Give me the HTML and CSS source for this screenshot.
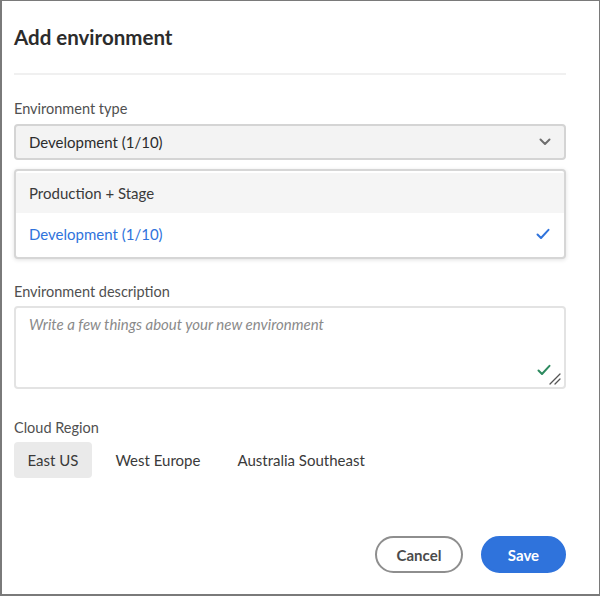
FILE: index.html
```html
<!DOCTYPE html>
<html>
<head>
<meta charset="utf-8">
<link rel="stylesheet" href="styles.css">
</head>
<body>
<div class="dialog">
  <h1 class="title">Add environment</h1>
  <div class="divider"></div>

  <div class="field type">
    <div class="label">Environment type</div>
    <div class="select">
      <span>Development (1/10)</span>
      <svg class="chev" width="12" height="8" viewBox="0 0 12 8"><path d="M1.5 1.5 L6 6 L10.5 1.5" fill="none" stroke="#6e6e6e" stroke-width="2" stroke-linecap="round" stroke-linejoin="round"/></svg>
    </div>
    <div class="menu">
      <div class="option hover">Production + Stage</div>
      <div class="option selected">
        <span>Development (1/10)</span>
        <svg width="14" height="12" viewBox="0 0 14 12"><path d="M1.5 6.5 L5 10 L12.5 1.8" fill="none" stroke="#2f73dc" stroke-width="2" stroke-linecap="round" stroke-linejoin="round"/></svg>
      </div>
    </div>
  </div>

  <div class="field desc">
    <div class="label">Environment description</div>
    <div class="textarea">
      <span class="placeholder">Write a few things about your new environment</span>
      <svg class="valid" width="14" height="12" viewBox="0 0 14 12"><path d="M1.5 6.5 L5 10 L12.5 1.8" fill="none" stroke="#2d8a5f" stroke-width="2" stroke-linecap="round" stroke-linejoin="round"/></svg>
      <svg class="grip" width="12" height="12" viewBox="0 0 12 12"><path d="M1 11 L11 1 M6 11 L11 6" fill="none" stroke="#555" stroke-width="1.3" stroke-linecap="round"/></svg>
    </div>
  </div>

  <div class="field region">
    <div class="label">Cloud Region</div>
    <div class="tabs">
      <div class="tab active">East US</div>
      <div class="tab">West Europe</div>
      <div class="tab">Australia Southeast</div>
    </div>
  </div>

  <div class="actions">
    <button class="btn secondary">Cancel</button>
    <button class="btn primary">Save</button>
  </div>
</div>
</body>
</html>
```
FILE: styles.css
```css
* { box-sizing: border-box; }
html, body { margin: 0; padding: 0; }
body { font-family: Lato, "Noto Sans", sans-serif; background: #fff; }
.dialog {
  width: 600px;
  height: 596px;
  border: 1px solid #7a7a7a;
  border-left-width: 2px;
  border-bottom-width: 2px;
  padding: 0 33px 0 12px;
  display: flex;
  flex-direction: column;
  position: relative;
}
.title {
  margin: 24px 0 0 0;
  font-size: 20.5px;
  font-weight: 700;
  color: #2c2c2c;
  line-height: 24px;
}
.divider {
  height: 2px;
  background: #f0f0f0;
  margin-top: 24px;
}
.field { display: flex; flex-direction: column; }
.label {
  font-size: 14.5px;
  color: #505050;
  line-height: 18px;
}
.type .label { margin-top: 25px; }
.select {
  margin-top: 6px;
  height: 36px;
  background: #f3f3f3;
  border: 2px solid #d4d4d4;
  border-radius: 4px;
  display: flex;
  align-items: center;
  justify-content: space-between;
  padding: 0 13px 0 13px;
  font-size: 15px;
  color: #2c2c2c;
}
.menu {
  margin-top: 9px;
  border: 2px solid #d6d6d6;
  border-radius: 4px;
  padding: 2px 0;
  box-shadow: 0 1px 4px rgba(0,0,0,0.12);
  background: #fff;
}
.option {
  height: 40px;
  display: flex;
  align-items: center;
  justify-content: space-between;
  padding: 0 14px 0 13px;
  font-size: 15px;
  color: #3a3a3a;
}
.option.hover { background: #f5f5f5; }
.option.selected { color: #2f73dc; height: 42px; }
.desc .label { margin-top: 24px; }
.desc .textarea { margin-top: 5px; }
.textarea {
  height: 83px;
  border: 2px solid #e3e3e3;
  border-radius: 4px;
  padding: 6px 13px;
  position: relative;
}
.placeholder {
  font-style: italic;
  font-size: 15px;
  color: #8a8a8a;
}
.valid { position: absolute; right: 13px; bottom: 11px; }
.grip { position: absolute; right: 3px; bottom: 2px; }
.region .label { margin-top: 30px; }
.tabs {
  margin-top: 5px;
  display: flex;
  gap: 10px;
}
.tab {
  height: 36px;
  padding: 0 13.5px;
  display: flex;
  align-items: center;
  border-radius: 4px;
  font-size: 15px;
  color: #3a3a3a;
}
.tab.active { background: #eaeaea; }
.actions {
  margin-top: auto;
  margin-bottom: 21px;
  display: flex;
  justify-content: flex-end;
  gap: 18px;
}
.btn {
  font-family: Lato, "Noto Sans", sans-serif;
  height: 37px;
  border-radius: 19px;
  font-size: 15px;
  font-weight: 700;
  padding: 0 18px;
  cursor: pointer;
}
.btn.secondary {
  background: #fff;
  border: 2px solid #8e8e8e;
  color: #4b4b4b;
  width: 88px;
}
.btn.primary {
  background: #2f73dc;
  border: 2px solid #2f73dc;
  color: #fff;
  width: 85px;
}
```
